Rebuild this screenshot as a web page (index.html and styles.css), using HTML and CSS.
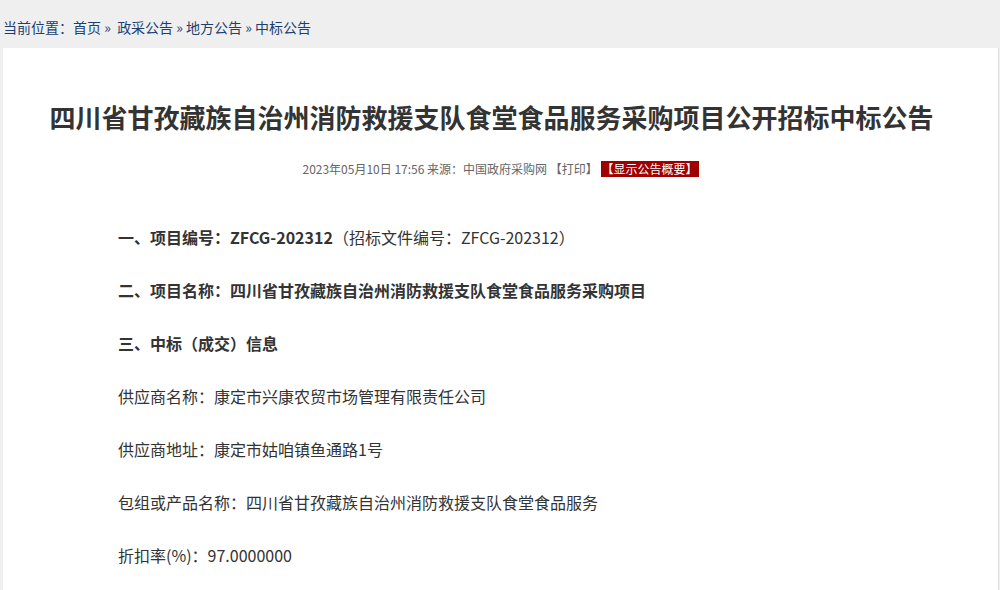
FILE: index.html
```html
<!DOCTYPE html>
<html lang="zh-CN">
<head>
<meta charset="utf-8">
<title>中标公告</title>
<link rel="stylesheet" href="styles.css">
</head>
<body>
<div class="crumbs">当前位置：<a>首页</a> » &nbsp;<a>政采公告</a> » <a>地方公告</a> » <a>中标公告</a></div>
<div class="panel">
  <h1 class="title">四川省甘孜藏族自治州消防救援支队食堂食品服务采购项目公开招标中标公告</h1>
  <div class="meta">2023年05月10日 17:56 来源：中国政府采购网 【打印】 <span class="badge">【显示公告概要】</span></div>
  <div class="content">
    <p class="b">一、项目编号：ZFCG-202312<span class="n">（招标文件编号：ZFCG-202312）</span></p>
    <p class="b">二、项目名称：四川省甘孜藏族自治州消防救援支队食堂食品服务采购项目</p>
    <p class="b">三、中标（成交）信息</p>
    <p>供应商名称：康定市兴康农贸市场管理有限责任公司</p>
    <p>供应商地址：康定市姑咱镇鱼通路1号</p>
    <p>包组或产品名称：四川省甘孜藏族自治州消防救援支队食堂食品服务</p>
    <p>折扣率(%)：97.0000000</p>
  </div>
</div>
</body>
</html>
```
FILE: styles.css
```css
html, body {
  margin: 0;
  padding: 0;
  background: #efefef;
  font-family: "Microsoft YaHei", "Noto Sans CJK SC", sans-serif;
  color: #333;
}
.crumbs {
  height: 48px;
  line-height: 54px;
  padding-left: 3px;
  font-size: 14px;
  color: #1b3f73;
  box-sizing: border-box;
}
.crumbs a {
  color: #1b3f73;
}
.panel {
  margin: 0 1px 0 3px;
  background: #fff;
  border-right: 1px solid #dcdcdc;
  height: 560px;
  overflow: hidden;
}
.title {
  margin: 0;
  padding: 50px 18px 0 0;
  font-size: 26px;
  line-height: 38px;
  font-weight: bold;
  text-align: center;
  color: #333;
}
.meta {
  margin-top: 23px;
  line-height: 20px;
  font-size: 12px;
  color: #666;
  text-align: center;
}
.badge {
  display: inline-block;
  background: #a00000;
  color: #fff;
  line-height: 16px;
  padding: 0 1px;
}
.content {
  margin-top: 32px;
  padding-left: 115px;
}
.content p {
  margin: 0;
  font-size: 16px;
  line-height: 53px;
  color: #333;
}
.content p.b {
  font-weight: bold;
}
.content .n {
  font-weight: normal;
}
```
